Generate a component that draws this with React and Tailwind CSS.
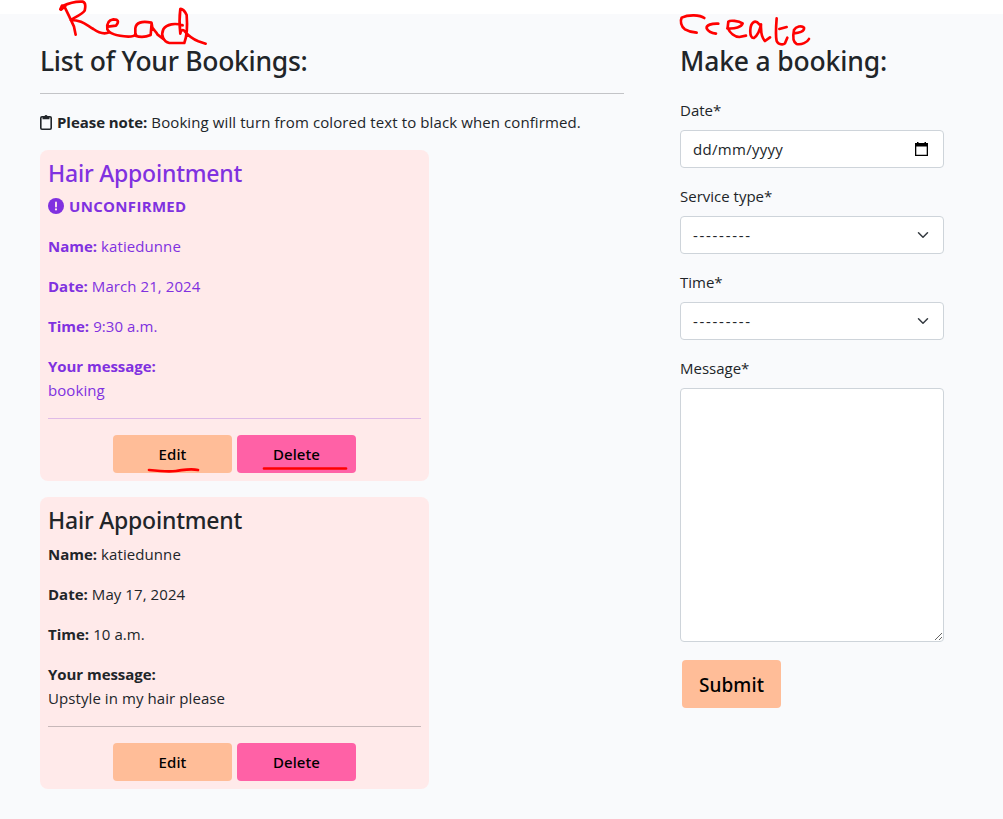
import React from "react";

const bookings = [
  {
    title: "Hair Appointment",
    confirmed: false,
    name: "katiedunne",
    date: "March 21, 2024",
    time: "9:30 a.m.",
    message: "booking",
  },
  {
    title: "Hair Appointment",
    confirmed: true,
    name: "katiedunne",
    date: "May 17, 2024",
    time: "10 a.m.",
    message: "Upstyle in my hair please",
  },
];

function Field({ label, children }) {
  return (
    <p className="mb-4">
      <strong className="font-bold tracking-normal">{label}</strong> {children}
    </p>
  );
}

function BookingCard({ booking }) {
  return (
    <article
      className={`mb-4 w-[389px] rounded-lg bg-[#ffeaea] p-2 ${
        booking.confirmed ? "text-[#212529]" : "text-[#8031e0]"
      }`}
    >
      <h3
        className={`mb-2 font-['Noto_Sans',sans-serif] text-[23px] leading-[30px] font-medium tracking-[-0.22px] ${
          booking.confirmed ? "h-[29px]" : "h-7"
        }`}
      >
        {booking.title}
      </h3>
      {!booking.confirmed && (
        <p className="mb-4 flex items-center gap-[5px] font-bold tracking-[0.32px]">
          <svg className="size-4" viewBox="0 0 16 16" aria-hidden="true">
            <circle cx="8" cy="8" r="8" fill="#8031e0" />
            <path d="M8 4.400v4.200" stroke="#ffeaea" strokeWidth="1.900" strokeLinecap="round" />
            <circle cx="8" cy="11.400" r="1.100" fill="#ffeaea" />
          </svg>
          UNCONFIRMED
        </p>
      )}
      <Field label="Name:">{booking.name}</Field>
      <Field label="Date:">{booking.date}</Field>
      <Field label="Time:">{booking.time}</Field>
      <p>
        <strong className="font-bold tracking-[-0.05px]">Your message:</strong>
        <br />
        {booking.message}
      </p>
      <hr className="mt-4 mb-4 border-current opacity-25" />
      <div className="flex justify-center gap-[5px] font-['Noto_Sans',sans-serif] text-black">
        <button className="h-[38px] w-[119px] rounded bg-[#ffbd98] font-medium">Edit</button>
        <button className="h-[38px] w-[119px] rounded bg-[#ff61a6] font-medium">Delete</button>
      </div>
    </article>
  );
}

function Select({ label }) {
  return (
    <div className="mb-4">
      <div className="mb-2 tracking-normal">{label}</div>
      <div className="flex h-[38px] items-center justify-between rounded border border-[#ced4da] bg-white pr-3 pl-3">
        <span className="tracking-[1.7px]">---------</span>
        <svg className="h-3 w-4" viewBox="0 0 16 16" fill="none" aria-hidden="true">
          <path d="m2 5 6 6 6-6" stroke="#343a40" strokeWidth="2" strokeLinecap="round" strokeLinejoin="round" />
        </svg>
      </div>
    </div>
  );
}

function Annotations() {
  return (
    <svg
      className="pointer-events-none absolute top-0 left-0 h-[819px] w-[1003px]"
      viewBox="0 0 1003 819"
      fill="none"
      stroke="#ff0000"
      strokeWidth="2.7"
      strokeLinecap="round"
      strokeLinejoin="round"
      aria-hidden="true"
    >
      <g transform="translate(50 0) scale(0.3333)" strokeWidth="8">
        <path d="M31 28L36 17L46 18L33 29M42 17L58 50L72 80L77 104M38 18C55 10 75 3 98 5C110 8 106 22 104 32C98 42 75 52 62 60C95 60 105 72 130 87C148 100 162 104 178 97" />
        <path d="M174 80L198 77C208 65 205 58 190 58C175 60 170 72 172 88C178 102 200 108 235 110C248 110 254 107 258 103" />
        <path d="M304 68C275 62 258 68 256 85L256 107C270 112 290 110 302 105L305 69C303 88 318 92 322 103L340 117" />
        <path d="M398 76C375 68 350 72 340 88C332 105 340 125 358 129L403 129C412 105 412 70 410 45C405 32 395 25 391 27C388 50 388 75 391 101C392 92 398 85 405 95C418 110 430 118 445 124L467 131" />
      </g>
      <g transform="translate(670 5) scale(0.3333)" strokeWidth="8">
        <path d="M103 39C90 29 55 28 35 38C30 48 33 65 45 73C55 79 65 82 80 83" />
        <path d="M145 56C125 55 108 60 110 70C115 80 125 84 138 86" />
        <path d="M172 70C195 72 215 66 218 55C205 47 180 45 175 50L173 68C180 85 195 95 208 96L228 92" />
        <path d="M268 58C255 42 242 52 241 75C240 92 245 100 252 99C265 90 270 75 273 58C272 80 275 98 285 108L300 97" />
        <path d="M320 40C318 65 317 95 320 108C325 120 340 120 345 115L352 98M328 72L350 66" />
        <path d="M372 85C385 84 405 80 402 68C395 60 378 65 372 75C368 95 370 112 380 117C395 120 412 112 417 102" />
      </g>
      <path d="M149 470c9 1 19 2 27 1s14-3 22-1M264 468.500h82" />
    </svg>
  );
}

export default function App() {
  return (
    <div className="relative h-[819px] w-[1003px] overflow-hidden bg-white pt-3.5 font-['Open_Sans','Noto_Sans',sans-serif] text-[15px] leading-6 tracking-[0.08px] text-[#212529]">
      <main className="flex h-[805px] gap-14 bg-[#f9fafc] pt-[30px] pl-10">
        <section className="w-[584px]">
          <h2 className="h-[49px] font-['Noto_Sans',sans-serif] text-[26.5px] leading-[34px] font-medium tracking-[-0.28px]">
            List of Your Bookings:
          </h2>
          <hr className="mb-4 border-[#c3c4c7]" />
          <p className="mb-4 flex items-center gap-[5px]">
            <svg className="h-4 w-3" viewBox="0 0 12 16" fill="none" aria-hidden="true">
              <rect x="0.800" y="2.800" width="10.400" height="12.400" rx="1.200" stroke="#212529" strokeWidth="1.600" />
              <path d="M2.500 2h2a1.600 1.600 0 0 1 3 0h2v3.200h-7z" fill="#212529" />
            </svg>
            <span className="tracking-[0.1px]">
              <strong className="font-bold tracking-[-0.05px]">Please note:</strong> Booking will turn from colored text
              to black when confirmed.
            </span>
          </p>
          {bookings.map((booking) => (
            <BookingCard key={booking.date} booking={booking} />
          ))}
        </section>
        <section className="w-[264px]">
          <h2 className="mb-[19px] h-[35px] font-['Noto_Sans',sans-serif] text-[26.5px] leading-[34px] font-medium tracking-[-0.17px]">
            Make a booking:
          </h2>
          <div className="mb-4">
            <div className="mb-2 tracking-normal">Date*</div>
            <div className="flex h-[38px] items-center justify-between rounded border border-[#ced4da] bg-white pr-[15px] pl-3">
              <span className="tracking-[0.3px]">dd/mm/yyyy</span>
              <svg className="h-[14px] w-[13px]" viewBox="0 0 13 14" aria-hidden="true">
                <path
                  d="M0 1h2V0h1.500v1h6V0H11v1h2v13H0zM1.300 4.500v8.200h10.400V4.500z"
                  fill="#000"
                  fillRule="evenodd"
                />
              </svg>
            </div>
          </div>
          <Select label="Service type*" />
          <Select label="Time*" />
          <label className="block">
            <span className="mb-2 block tracking-normal">Message*</span>
            <textarea className="block h-[254px] w-full resize rounded border border-[#ced4da] bg-white p-2" />
          </label>
          <button className="mt-[18px] ml-0.5 h-12 w-[99px] rounded bg-[#ffbd98] pt-0.5 font-['Noto_Sans',sans-serif] text-[19px] font-medium text-black">
            Submit
          </button>
        </section>
      </main>
      <Annotations />
    </div>
  );
}
